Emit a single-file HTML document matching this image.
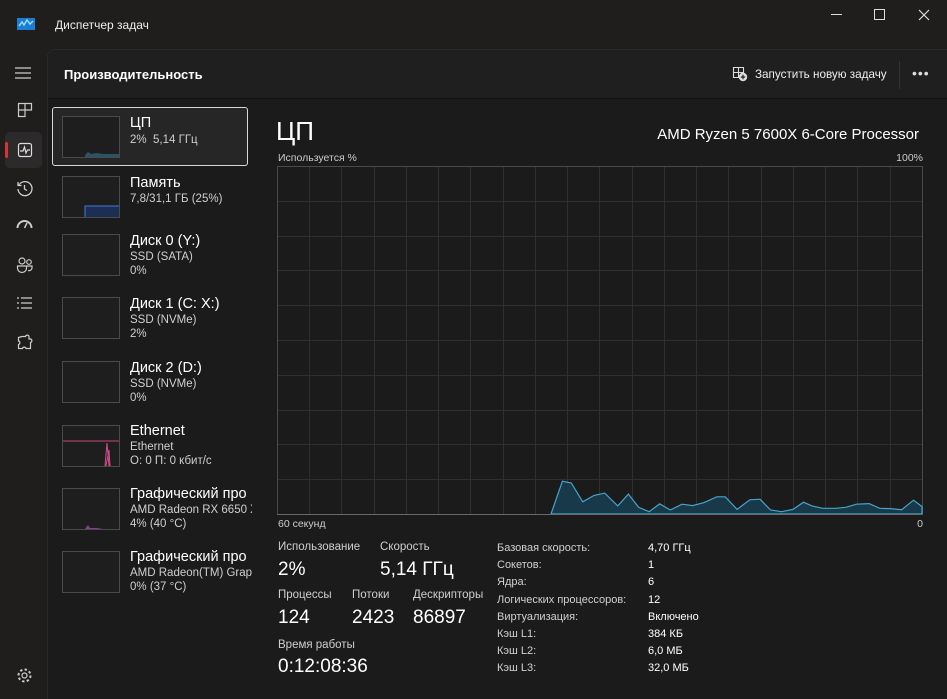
<!DOCTYPE html>
<html><head><meta charset="utf-8"><style>
*{margin:0;padding:0;box-sizing:border-box}
body{width:947px;height:699px;background:#201d1d;font-family:"Liberation Sans","DejaVu Sans",sans-serif;color:#fff;position:relative;overflow:hidden}
.a{position:absolute;white-space:nowrap}
.panel{position:absolute;left:47px;top:49px;width:900px;height:650px;background:#1b1b1b;border-top-left-radius:8px;border-left:1px solid #2a2a2a;border-top:1px solid #2a2a2a}
.hdr{position:absolute;left:48px;top:50px;width:899px;height:49px;background:#1f1f1f;border-bottom:1px solid #121212;border-top-left-radius:8px}
.th{position:absolute;left:62px;width:58px;height:42px;border:1px solid #4a4a4a;background:#1e1e1e}
.t1{font-size:14.5px;color:#fff}
.t2{font-size:11.5px;color:#cfcfcf}
.ic{position:absolute;left:14px}
.g{font-size:11.5px;color:#cfcfcf}
.v{font-size:19px;color:#fff}
.k{font-size:11px;color:#d0d0d0}
</style></head><body>
<div class="panel"></div>
<div class="hdr"></div>
<!-- title bar -->
<svg class="a" style="left:17px;top:17px" width="18" height="14"><rect x="0" y="1" width="18" height="12" fill="#1a7fd4"/><path d="M2 9 L5 5 L7 8 L10 3 L13 7 L16 4" stroke="#9fe0ff" stroke-width="1.4" fill="none"/></svg>
<div class="a" style="left:55px;top:18px;font-size:12px;color:#eee">Диспетчер задач</div>
<div class="a" style="left:831px;top:14px;width:11px;height:1px;background:#ddd"></div>
<div class="a" style="left:874px;top:9px;width:11px;height:11px;border:1px solid #ddd"></div>
<svg class="a" style="left:918px;top:9px" width="12" height="12"><path d="M1 1L11 11M11 1L1 11" stroke="#ddd" stroke-width="1.2"/></svg>
<!-- sidebar -->
<svg class="ic" style="top:66px" width="18" height="14"><path d="M1 2H17M1 7H17M1 12H17" stroke="#ccc" stroke-width="1.2"/></svg>
<svg class="ic" style="left:17px;top:102px" width="16" height="16"><path d="M1.5 1.5H8V8H1.5ZM8 1.5H14.5V8H8ZM1.5 8H8V14.5H1.5Z" stroke="#ccc" stroke-width="1.2" fill="none"/></svg>
<div class="a" style="left:5px;top:132px;width:37px;height:36px;background:#2c2a2a;border-radius:5px"></div>
<div class="a" style="left:5px;top:142px;width:3px;height:16px;background:#d8323a;border-radius:2px"></div>
<svg class="ic" style="left:17px;top:142px" width="16" height="16"><rect x="1.5" y="1.5" width="13" height="13" rx="2" stroke="#ddd" stroke-width="1.2" fill="none"/><path d="M3 9H6L7.5 5L9 11L10.5 8H13" stroke="#ddd" stroke-width="1.2" fill="none"/></svg>
<svg class="ic" style="left:16px;top:180px" width="17" height="17"><path d="M3 5A7 7 0 1 1 2 9" stroke="#ccc" stroke-width="1.3" fill="none"/><path d="M2 2V5.5H5.5" stroke="#ccc" stroke-width="1.3" fill="none"/><path d="M8.5 5V9L11 10.5" stroke="#ccc" stroke-width="1.3" fill="none"/></svg>
<svg class="ic" style="left:16px;top:220px" width="17" height="12"><path d="M1.5 8A7 7 0 0 1 15.5 8" stroke="#ccc" stroke-width="2" fill="none"/><path d="M8.5 8L11 3" stroke="#ccc" stroke-width="1.5"/></svg>
<svg class="ic" style="left:16px;top:256px" width="18" height="18"><circle cx="6" cy="5" r="3" stroke="#ccc" stroke-width="1.2" fill="none"/><circle cx="13" cy="6" r="2.3" stroke="#ccc" stroke-width="1.2" fill="none"/><path d="M1.5 10H10.5V12A4.5 4.5 0 0 1 1.5 12Z M11 10H16V12A3 3 0 0 1 12 14.5" stroke="#ccc" stroke-width="1.2" fill="none"/></svg>
<svg class="ic" style="left:16px;top:296px" width="17" height="14"><path d="M1 2H3M1 7H3M1 12H3M5 2H16M5 7H16M5 12H16" stroke="#ccc" stroke-width="1.3"/></svg>
<svg class="ic" style="left:16px;top:334px" width="17" height="17"><path d="M6 2.5H9.5A1.8 1.8 0 0 1 13 2.5V5H14.5A1.8 1.8 0 0 1 14.5 8.5V14.5H10A1.8 1.8 0 0 0 6.5 14.5H2.5V10.5A1.8 1.8 0 0 0 2.5 7V3.5Z" stroke="#ccc" stroke-width="1.2" fill="none"/></svg>
<svg class="ic" style="left:16px;top:667px" width="17" height="17"><circle cx="8.5" cy="8.5" r="2.5" stroke="#ccc" stroke-width="1.2" fill="none"/><circle cx="8.5" cy="8.5" r="6" stroke="#ccc" stroke-width="2" stroke-dasharray="2.4 2.3" fill="none"/></svg>
<!-- header -->
<div class="a" style="left:64px;top:67px;font-size:13px;font-weight:bold;color:#fff">Производительность</div>
<svg class="a" style="left:732px;top:66px" width="16" height="16"><path d="M1.5 1.5H6.5V6.5H1.5ZM6.5 1.5H11.5V6.5H6.5ZM1.5 6.5H6.5V11.5H1.5Z" stroke="#ddd" stroke-width="1.1" fill="none"/><circle cx="11" cy="11" r="4.2" fill="#ddd"/><path d="M11 8.8V13.2M8.8 11H13.2" stroke="#1f1f1f" stroke-width="1.2"/></svg>
<div class="a" style="left:755px;top:68px;font-size:11.7px;color:#eee">Запустить новую задачу</div>
<div class="a" style="left:899px;top:61px;width:1px;height:28px;background:#333"></div>
<div class="a" style="left:912px;top:65px;font-size:14px;color:#ddd;letter-spacing:1px">•••</div>
<!-- list -->
<div class="a" style="left:52px;top:107px;width:196px;height:59px;border:1.5px solid #d8d8d8;border-radius:3px;background:#262626"></div>
<div class="th" style="top:116px"><svg width="56" height="40" style="position:absolute;left:0;top:0"><path d="M22 38L25 35L28 37L33 36L40 37L56 37V40H22Z" fill="#2d6a84" opacity=".7"/></svg></div>
<div class="a t1" style="left:130px;top:115px">ЦП</div><div class="a t2" style="left:130px;top:134px">2%&nbsp; 5,14 ГГц</div>
<div class="th" style="top:176px"><svg width="56" height="40" style="position:absolute;left:0;top:0"><path d="M22 40V29H56V40Z" fill="#1b2f55"/><path d="M22 40V29H56" stroke="#3c7bd0" stroke-width="1" fill="none"/></svg></div>
<div class="a t1" style="left:130px;top:175px">Память</div><div class="a t2" style="left:130px;top:193px">7,8/31,1 ГБ (25%)</div>
<div class="th" style="top:234px"></div>
<div class="a t1" style="left:130px;top:233px">Диск 0 (Y:)</div><div class="a t2" style="left:130px;top:251px">SSD (SATA)</div><div class="a t2" style="left:130px;top:265px">0%</div>
<div class="th" style="top:297px"></div>
<div class="a t1" style="left:130px;top:296px">Диск 1 (C: X:)</div><div class="a t2" style="left:130px;top:314px">SSD (NVMe)</div><div class="a t2" style="left:130px;top:328px">2%</div>
<div class="th" style="top:361px"></div>
<div class="a t1" style="left:130px;top:360px">Диск 2 (D:)</div><div class="a t2" style="left:130px;top:378px">SSD (NVMe)</div><div class="a t2" style="left:130px;top:392px">0%</div>
<div class="th" style="top:425px"><svg width="56" height="40" style="position:absolute;left:0;top:0"><path d="M0 15H56" stroke="#c8447a" stroke-width="1"/><path d="M42 40L44 17L46 40M43 40L46 24L47 40" stroke="#d04f8a" stroke-width="1" fill="none"/></svg></div>
<div class="a t1" style="left:130px;top:423px">Ethernet</div><div class="a t2" style="left:130px;top:441px">Ethernet</div><div class="a t2" style="left:130px;top:455px">О: 0 П: 0 кбит/с</div>
<div class="th" style="top:488px"><svg width="56" height="40" style="position:absolute;left:0;top:0"><path d="M22 40L25 36L27 39L34 39L40 40Z" fill="#9a4ab0" opacity=".8"/></svg></div>
<div class="a t1" style="left:130px;top:486px">Графический про</div><div class="a t2" style="left:130px;top:504px">AMD Radeon RX 6650 X</div><div class="a t2" style="left:130px;top:518px">4% (40 °C)</div>
<div class="th" style="top:551px"></div>
<div class="a t1" style="left:130px;top:549px">Графический про</div><div class="a t2" style="left:130px;top:567px">AMD Radeon(TM) Grapl</div><div class="a t2" style="left:130px;top:581px">0% (37 °C)</div>
<div class="a" style="left:252px;top:100px;width:8px;height:599px;background:#1b1b1b"></div>
<!-- main -->
<div class="a" style="left:276px;top:116px;font-size:26px;color:#fff">ЦП</div>
<div class="a" style="right:28px;top:126px;font-size:15px;color:#fff">AMD Ryzen 5 7600X 6-Core Processor</div>
<div class="a" style="left:278px;top:152px;font-size:10.5px;color:#ccc">Используется %</div>
<div class="a" style="right:24px;top:152px;font-size:10.5px;color:#ccc">100%</div>
<svg class="a" style="left:277px;top:166px" width="646" height="350">
<rect x="0.5" y="0.5" width="645" height="348" fill="#1b1b1b" stroke="#4a4a4a"/>
<g stroke="#2f2f2f" stroke-width="1">
<path d="M32.5 1V348M64.5 1V348M97.5 1V348M129.5 1V348M161.5 1V348M193.5 1V348M226.5 1V348M258.5 1V348M290.5 1V348M322.5 1V348M355.5 1V348M387.5 1V348M419.5 1V348M451.5 1V348M484.5 1V348M516.5 1V348M548.5 1V348M580.5 1V348M613.5 1V348"/>
<path d="M1 35.5H645M1 70.5H645M1 104.5H645M1 139.5H645M1 174.5H645M1 209.5H645M1 244.5H645M1 278.5H645M1 313.5H645"/>
</g>
<g transform="translate(-277,-166)">
<path d="M551 514L562.4 481.2L571.3 483L582.7 501.8L594.1 495.4L604.7 493.1L617.8 505.9L628.4 494.1L638.6 507.3L649.1 511.7L659.7 503.9L670.3 510L682.1 504.2L692.7 505.6L704.1 502.6L716.8 496.8L725.3 496.8L737.1 509.4L749.8 499.8L760 499.2L770.5 510L781.5 511.7L793 509.4L803.5 502.2L812 505.9L822.6 508.3L835.3 508.3L845.8 507.3L856.4 504.2L869.1 503.6L879.7 508.3L890.3 508.6L901.7 509.7L913.5 500.2L922 506.6V514Z" fill="#17394a" stroke="#4aa3c8" stroke-width="1.2"/>
</g>
<path d="M0.5 348.5H645.5" stroke="#6a6a6a"/>
</svg>
<div class="a" style="left:278px;top:518px;font-size:10.5px;color:#ccc">60 секунд</div>
<div class="a" style="right:24px;top:518px;font-size:10.5px;color:#ccc">0</div>
<div class="a g" style="left:278px;top:541px">Использование</div>
<div class="a g" style="left:380px;top:541px">Скорость</div>
<div class="a v" style="left:278px;top:559px">2%</div>
<div class="a v" style="left:380px;top:559px">5,14 ГГц</div>
<div class="a g" style="left:278px;top:589px">Процессы</div>
<div class="a g" style="left:352px;top:589px">Потоки</div>
<div class="a g" style="left:413px;top:589px">Дескрипторы</div>
<div class="a v" style="left:278px;top:607px">124</div>
<div class="a v" style="left:352px;top:607px">2423</div>
<div class="a v" style="left:413px;top:607px">86897</div>
<div class="a g" style="left:278px;top:639px">Время работы</div>
<div class="a v" style="left:278px;top:656px">0:12:08:36</div>
<div class="a k" style="left:497px;top:540px;line-height:17.2px">Базовая скорость:<br>Сокетов:<br>Ядра:<br>Логических процессоров:<br>Виртуализация:<br>Кэш L1:<br>Кэш L2:<br>Кэш L3:</div>
<div class="a k" style="left:648px;top:540px;line-height:17.2px;color:#fff">4,70 ГГц<br>1<br>6<br>12<br>Включено<br>384 КБ<br>6,0 МБ<br>32,0 МБ</div>
</body></html>
